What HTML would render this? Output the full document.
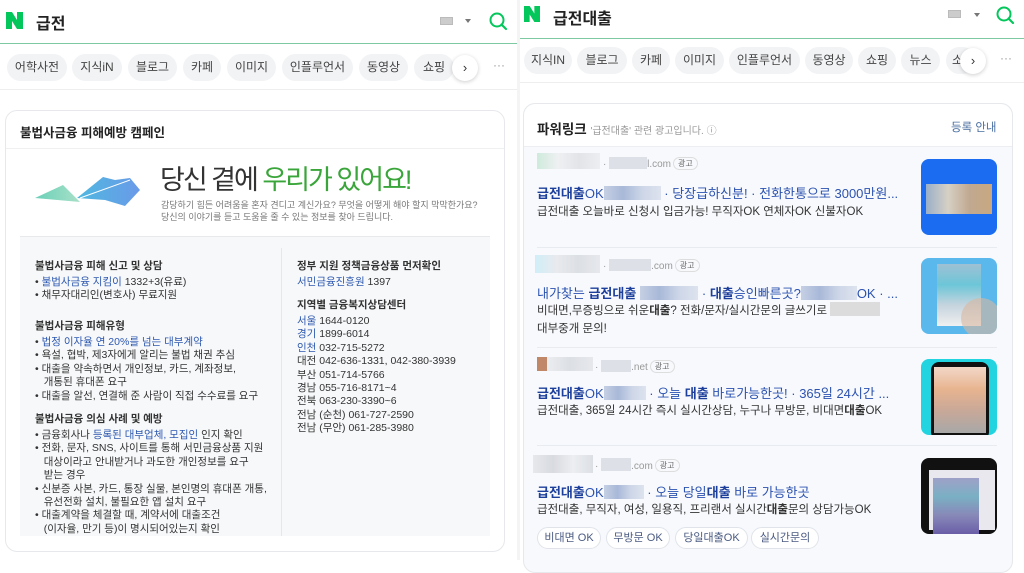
<!DOCTYPE html>
<html><head><meta charset="utf-8"><style>
*{margin:0;padding:0;box-sizing:border-box}
body{width:1024px;height:560px;overflow:hidden;background:#fff;font-family:"Liberation Sans","Noto Sans CJK KR",sans-serif;position:relative;color:#222}
.a{position:absolute;white-space:nowrap}
.pill{position:absolute;height:27px;border-radius:14px;background:#f2f3f5;font-size:12px;color:#444;line-height:27px;text-align:center}
.circ{position:absolute;width:26px;height:26px;border-radius:50%;background:#fff;box-shadow:0 1px 4px rgba(0,0,0,.2);font-size:13px;line-height:25px;text-align:center;color:#333}
.s{font-size:10.5px;color:#333;line-height:13.4px}
.b{color:#2d58b0}
.h{font-size:10.5px;font-weight:bold;color:#333}
.blur{position:absolute;background:linear-gradient(90deg,#e6e8ec,#d8dbe0,#eceef1,#dcdfe4);}
.bb{display:inline-block;height:14px;vertical-align:-2px;background:linear-gradient(90deg,#c6d0e4,#a8b8d8,#cdd6e8,#dde3ee)}
.t{font-size:13px;color:#2c52b0}
.t b{color:#1d3f9c}
.d{font-size:11.5px;color:#333}
.ad{display:inline-block;font-size:8px;color:#666;border:1px solid #ddd;border-radius:8px;padding:0 4px;line-height:11px;vertical-align:1px;margin-left:2px}
.chip{position:absolute;top:527px;height:22px;border:1px solid #e0e4ea;border-radius:11px;font-size:11px;color:#4a5a80;line-height:20px;text-align:center;background:#fff}
</style></head><body>
<!-- LEFT -->
<svg class="a" style="left:6px;top:12px" width="17" height="17" viewBox="0 0 17 17"><path d="M0 0H6L11 8V0H17V17H11L6 9V17H0Z" fill="#03c75a"/></svg>
<div class="a" style="left:36px;top:10px;font-size:16px;font-weight:bold">급전</div>
<div class="a" style="left:440px;top:17px;width:13px;height:8px;background:#ccc;border:1px solid #bbb"></div>
<div class="a" style="left:465px;top:19px;border-left:3px solid transparent;border-right:3px solid transparent;border-top:4px solid #777"></div>
<svg class="a" style="left:488px;top:11px" width="20" height="20" viewBox="0 0 20 20"><circle cx="9" cy="9" r="6.5" fill="none" stroke="#03c75a" stroke-width="2"/><path d="M13.5 13.5L18 18" stroke="#03c75a" stroke-width="2.2" stroke-linecap="round"/></svg>
<div class="a" style="left:0;top:43px;width:517px;height:1px;background:#7cc9a2"></div>
<div class="pill" style="left:7px;top:54px;width:60px">어학사전</div>
<div class="pill" style="left:72px;top:54px;width:50px">지식iN</div>
<div class="pill" style="left:128px;top:54px;width:49px">블로그</div>
<div class="pill" style="left:183px;top:54px;width:38px">카페</div>
<div class="pill" style="left:227px;top:54px;width:49px">이미지</div>
<div class="pill" style="left:282px;top:54px;width:71px">인플루언서</div>
<div class="pill" style="left:359px;top:54px;width:49px">동영상</div>
<div class="pill" style="left:414px;top:54px;width:40px">쇼핑</div>
<div class="circ" style="left:452px;top:55px">›</div>
<div class="a" style="left:493px;top:58px;font-size:12px;color:#999">···</div>
<div class="a" style="left:0;top:89px;width:517px;height:1px;background:#eee"></div>
<div class="a" style="left:5px;top:110px;width:500px;height:442px;border:1px solid #e6e8eb;border-radius:12px;background:#fff"></div>
<div class="a" style="left:20px;top:122px;font-size:12.5px;font-weight:bold;color:#222">불법사금융 피해예방 캠페인</div>
<div class="a" style="left:6px;top:148px;width:498px;height:1px;background:#eef0f2"></div>
<svg class="a" style="left:35px;top:170px" width="110" height="42" viewBox="0 0 110 42"><defs><linearGradient id="g1" x1="0" x2="1"><stop offset="0" stop-color="#6bd0b8"/><stop offset="1" stop-color="#a8e0c8"/></linearGradient><linearGradient id="g2" x1="0" x2="1"><stop offset="0" stop-color="#4fb8e0"/><stop offset="1" stop-color="#6a9ae8"/></linearGradient></defs><path d="M0 28L28 15L45 32Z" fill="url(#g1)"/><path d="M42 28L68 7L80 10L95 8L105 20L90 36L70 30Z" fill="url(#g2)"/><path d="M45 28L95 10" stroke="#fff" stroke-width="1"/></svg>
<div class="a" style="left:160px;top:158px;font-size:27px;color:#333;letter-spacing:-2px">당신 곁에 <span style="color:#3aa53a">우리가 있어요!</span></div>
<div class="a" style="left:161px;top:199px;font-size:9px;color:#777;line-height:12px">감당하기 힘든 어려움을 혼자 견디고 계신가요? 무엇을 어떻게 해야 할지 막막한가요?<br>당신의 이야기를 듣고 도움을 줄 수 있는 정보를 찾아 드립니다.</div>
<div class="a" style="left:20px;top:236px;width:470px;height:300px;background:#f7f8fa;border-top:1px solid #e8e9eb"></div>
<div class="a" style="left:281px;top:248px;width:1px;height:288px;background:#e6e7e9"></div>
<div class="a h" style="left:35px;top:258px">불법사금융 피해 신고 및 상담</div>
<div class="a s" style="left:35px;top:276px">• <span class="b">불법사금융 지킴이</span> 1332+3(유료)<br>• 채무자대리인(변호사) 무료지원</div>
<div class="a h" style="left:35px;top:318px">불법사금융 피해유형</div>
<div class="a s" style="left:35px;top:336px">• <span class="b">법정 이자율 연 20%를 넘는 대부계약</span><br>• 욕설, 협박, 제3자에게 알리는 불법 채권 추심<br>• 대출을 약속하면서 개인정보, 카드, 계좌정보,<br>&nbsp;&nbsp;&nbsp;개통된 휴대폰 요구<br>• 대출을 알선, 연결해 준 사람이 직접 수수료를 요구</div>
<div class="a h" style="left:35px;top:411px">불법사금융 의심 사례 및 예방</div>
<div class="a s" style="left:35px;top:429px">• 금융회사나 <span class="b">등록된 대부업체, 모집인</span> 인지 확인<br>• 전화, 문자, SNS, 사이트를 통해 서민금융상품 지원<br>&nbsp;&nbsp;&nbsp;대상이라고 안내받거나 과도한 개인정보를 요구<br>&nbsp;&nbsp;&nbsp;받는 경우<br>• 신분증 사본, 카드, 통장 실물, 본인명의 휴대폰 개통,<br>&nbsp;&nbsp;&nbsp;유선전화 설치, 불필요한 앱 설치 요구<br>• 대출계약을 체결할 때, 계약서에 대출조건<br>&nbsp;&nbsp;&nbsp;(이자율, 만기 등)이 명시되어있는지 확인</div>
<div class="a h" style="left:297px;top:258px">정부 지원 정책금융상품 먼저확인</div>
<div class="a s" style="left:297px;top:276px"><span class="b">서민금융진흥원</span> 1397</div>
<div class="a h" style="left:297px;top:297px">지역별 금융복지상담센터</div>
<div class="a s" style="left:297px;top:315px"><span class="b">서울</span> 1644-0120<br><span class="b">경기</span> 1899-6014<br><span class="b">인천</span> 032-715-5272<br>대전 042-636-1331, 042-380-3939<br>부산 051-714-5766<br>경남 055-716-8171~4<br>전북 063-230-3390~6<br>전남 (순천) 061-727-2590<br>전남 (무안) 061-285-3980</div>

<!-- RIGHT -->
<div class="a" style="left:517px;top:0;width:3px;height:560px;background:#f4f4f4"></div>
<svg class="a" style="left:524px;top:6px" width="16" height="16" viewBox="0 0 17 17"><path d="M0 0H6L11 8V0H17V17H11L6 9V17H0Z" fill="#03c75a"/></svg>
<div class="a" style="left:553px;top:5px;font-size:16px;font-weight:bold">급전대출</div>
<div class="a" style="left:948px;top:10px;width:13px;height:8px;background:#ccc;border:1px solid #bbb"></div>
<div class="a" style="left:974px;top:13px;border-left:3px solid transparent;border-right:3px solid transparent;border-top:4px solid #777"></div>
<svg class="a" style="left:995px;top:5px" width="20" height="20" viewBox="0 0 20 20"><circle cx="9" cy="9" r="6.5" fill="none" stroke="#03c75a" stroke-width="2"/><path d="M13.5 13.5L18 18" stroke="#03c75a" stroke-width="2.2" stroke-linecap="round"/></svg>
<div class="a" style="left:520px;top:38px;width:504px;height:1px;background:#7cc9a2"></div>
<div class="pill" style="left:524px;top:47px;width:48px">지식IN</div>
<div class="pill" style="left:577px;top:47px;width:50px">블로그</div>
<div class="pill" style="left:632px;top:47px;width:38px">카페</div>
<div class="pill" style="left:675px;top:47px;width:49px">이미지</div>
<div class="pill" style="left:729px;top:47px;width:71px">인플루언서</div>
<div class="pill" style="left:805px;top:47px;width:48px">동영상</div>
<div class="pill" style="left:858px;top:47px;width:38px">쇼핑</div>
<div class="pill" style="left:901px;top:47px;width:39px">뉴스</div>
<div class="pill" style="left:946px;top:47px;width:30px;text-align:left;padding-left:6px">소</div>
<div class="circ" style="left:960px;top:48px">›</div>
<div class="a" style="left:1000px;top:51px;font-size:12px;color:#999">···</div>
<div class="a" style="left:520px;top:82px;width:504px;height:1px;background:#eee"></div>
<div class="a" style="left:523px;top:103px;width:490px;height:470px;border:1px solid #e6e8eb;border-radius:12px;background:#f7f9fc"></div>
<div class="a" style="left:524px;top:104px;width:488px;height:43px;border-radius:12px 12px 0 0;background:#fff;border-bottom:1px solid #eceef2"></div>
<div class="a" style="left:537px;top:118px;font-size:13.5px;font-weight:bold;color:#222">파워링크 <span style="font-size:10px;font-weight:normal;color:#999">'급전대출' 관련 광고입니다. ⓘ</span></div>
<div class="a" style="left:951px;top:119px;font-size:11.5px;color:#4a6ea0">등록 안내</div>

<!-- ad1 -->
<div class="blur" style="left:537px;top:153px;width:63px;height:16px;background:linear-gradient(90deg,#cfeadc,#eef0f2,#e2e4e8,#eceef0)"></div>
<div class="a" style="left:603px;top:157px;font-size:10px;color:#999">· <span class="bb" style="width:38px;height:12px;background:#dde0e6"></span>l.com<span class="ad">광고</span></div>
<div class="a t" style="left:537px;top:183px"><b>급전대출</b>OK<span class="bb" style="width:57px"></span> · 당장급하신분! · 전화한통으로 3000만원...</div>
<div class="a d" style="left:537px;top:203px">급전대출 오늘바로 신청시 입금가능! 무직자OK 연체자OK 신불자OK</div>
<div class="a" style="left:921px;top:159px;width:76px;height:76px;border-radius:8px;background:#1b6cf0;overflow:hidden"><div style="position:absolute;left:5px;top:25px;width:66px;height:30px;background:linear-gradient(90deg,#9ab0c8,#d6d0c4,#c0a890,#c8a880)"></div></div>
<div class="a" style="left:537px;top:247px;width:460px;height:1px;background:#e8ebf0"></div>
<!-- ad2 -->
<div class="blur" style="left:535px;top:255px;width:65px;height:18px;background:linear-gradient(90deg,#d0eef8,#e8eaee,#dcdfe4,#e6e8ec)"></div>
<div class="a" style="left:603px;top:259px;font-size:10px;color:#999">· <span class="bb" style="width:42px;height:12px;background:#dde0e6"></span>.com<span class="ad">광고</span></div>
<div class="a t" style="left:537px;top:283px">내가찾는 <b>급전대출</b><span class="bb" style="width:58px;margin-left:4px"></span> · <b>대출</b>승인빠른곳?<span class="bb" style="width:56px"></span>OK · ...</div>
<div class="a d" style="left:537px;top:302px;line-height:18px">비대면,무증빙으로 쉬운<b>대출</b>? 전화/문자/실시간문의 글쓰기로<span class="bb" style="width:50px;background:#dcdcdc;margin-left:3px"></span><br>대부중개 문의!</div>
<div class="a" style="left:921px;top:258px;width:76px;height:76px;border-radius:8px;background:#5ab8ec;overflow:hidden"><div style="position:absolute;left:16px;top:6px;width:44px;height:62px;background:linear-gradient(180deg,#9fc0d4,#6cc6d8,#c6d4de,#f0f0f0)"></div><div style="position:absolute;left:40px;top:40px;width:40px;height:40px;border-radius:50%;background:#d8b8a0;opacity:.6"></div></div>
<div class="a" style="left:537px;top:347px;width:460px;height:1px;background:#e8ebf0"></div>
<!-- ad3 -->
<div class="blur" style="left:537px;top:357px;width:56px;height:14px;background:linear-gradient(90deg,#c08868 0 10px,#ebedf0 10px,#dcdfe4,#e6e8ec)"></div>
<div class="a" style="left:595px;top:360px;font-size:10px;color:#999">· <span class="bb" style="width:30px;height:12px;background:#dde0e6"></span>.net<span class="ad">광고</span></div>
<div class="a t" style="left:537px;top:383px"><b>급전대출</b>OK<span class="bb" style="width:42px"></span> · 오늘 <b>대출</b> 바로가능한곳! · 365일 24시간 ...</div>
<div class="a d" style="left:537px;top:402px">급전대출, 365일 24시간 즉시 실시간상담, 누구나 무방문, 비대면<b>대출</b>OK</div>
<div class="a" style="left:921px;top:359px;width:76px;height:76px;border-radius:8px;background:#22d4e0;overflow:hidden"><div style="position:absolute;left:10px;top:3px;width:58px;height:78px;border-radius:8px;background:#111"></div><div style="position:absolute;left:13px;top:8px;width:52px;height:66px;background:linear-gradient(180deg,#f2d8c8,#e8b490,#c8a898,#a8a8a8)"></div></div>
<div class="a" style="left:537px;top:445px;width:460px;height:1px;background:#e8ebf0"></div>
<!-- ad4 -->
<div class="blur" style="left:533px;top:455px;width:60px;height:18px"></div>
<div class="a" style="left:595px;top:458px;font-size:10px;color:#999">· <span class="bb" style="width:30px;height:13px;background:#dde0e6"></span>.com<span class="ad">광고</span></div>
<div class="a t" style="left:537px;top:482px"><b>급전대출</b>OK<span class="bb" style="width:40px"></span> · 오늘 당일<b>대출</b> 바로 가능한곳</div>
<div class="a d" style="left:537px;top:501px">급전대출, 무직자, 여성, 일용직, 프리랜서 실시간<b>대출</b>문의 상담가능OK</div>
<div class="chip" style="left:537px;width:64px">비대면 OK</div>
<div class="chip" style="left:606px;width:64px">무방문 OK</div>
<div class="chip" style="left:675px;width:73px">당일대출OK</div>
<div class="chip" style="left:751px;width:68px">실시간문의</div>
<div class="a" style="left:921px;top:458px;width:76px;height:76px;border-radius:8px;background:#111;overflow:hidden"><div style="position:absolute;left:8px;top:12px;width:66px;height:60px;background:#e8e8ee"></div><div style="position:absolute;left:12px;top:20px;width:46px;height:56px;background:linear-gradient(180deg,#9ea0c8,#7ab0c4,#8888b8,#6a5ea8)"></div></div>
</body></html>
